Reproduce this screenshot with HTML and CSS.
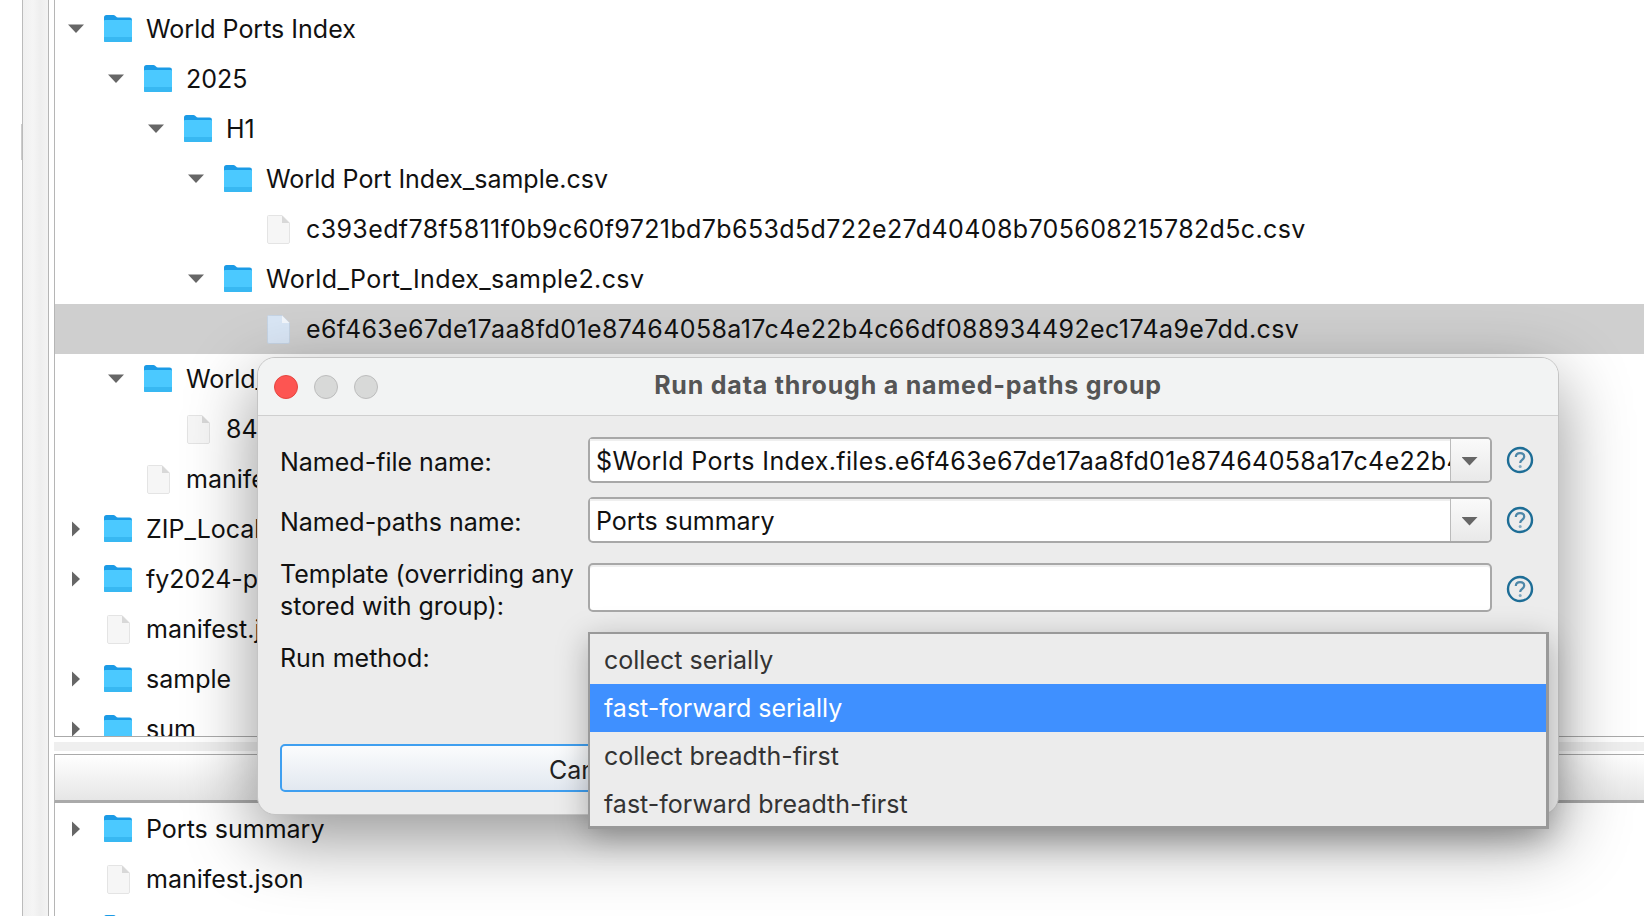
FILE: index.html
```html
<!DOCTYPE html>
<html lang="en">
<head>
    <meta charset="UTF-8">
    <meta name="viewport" content="width=device-width, initial-scale=1.0">
    <title>Run data through a named-paths group</title>
    <link rel="stylesheet" href="styles.css">
</head>
<body>
    <svg class="defs" width="0" height="0">
        <symbol id="folder" viewBox="0 0 28 28">
            <path d="M0 2.5Q0 0 2.5 0H9.5Q11 0 12 1.5Q12.8 2.6 14 2.6H25.5Q28 2.6 28 5V25.5Q28 27 26 27H2Q0 27 0 25.5Z" fill="#1b9be6"/>
            <path d="M0 6Q0 5 1 5H27Q28 5 28 6V25.5Q28 27 26 27H2Q0 27 0 25.5Z" fill="#4bc9ff"/>
            <path d="M0 22H28V25.5Q28 27 26 27H2Q0 27 0 25.5Z" fill="#38b8f2"/>
        </symbol>
        <symbol id="file" viewBox="0 0 23 29">
            <path d="M1.5 .5H15L22.5 8V27Q22.5 28.5 21 28.5H2Q.5 28.5 .5 27V1.5Q.5 .5 1.5 .5Z" fill="#f6f6f6" stroke="#e4e4e4"/>
            <path d="M15 .5V8H22.5Z" fill="#d8d8d8"/>
        </symbol>
        <symbol id="file-selected" viewBox="0 0 23 29">
            <path d="M1.5 .5H15L22.5 8V27Q22.5 28.5 21 28.5H2Q.5 28.5 .5 27V1.5Q.5 .5 1.5 .5Z" fill="#d9e6f5" stroke="#c6d4e4"/>
            <path d="M15 .5V8H22.5Z" fill="#f2f6fb"/>
        </symbol>
        <symbol id="help" viewBox="0 0 28 28">
            <circle cx="14" cy="14" r="12" fill="none" stroke="#1d6d96" stroke-width="2.4"/>
            <path d="M9.8 11Q10 7.2 14 7.2Q18.2 7.2 18.2 10.6Q18.2 12.6 16 14Q14.2 15.1 14.2 17" fill="none" stroke="#4d87a8" stroke-width="2.2"/>
            <circle cx="14.2" cy="20.4" r="1.5" fill="#7fa9c1"/>
        </symbol>
    </svg>

    <div class="side-strip"></div>

    <div class="panels">
        <div class="tree top-tree">
            <div class="row lvl0"><i class="arrow down"></i><svg class="folder"><use href="#folder"/></svg><span>World Ports Index</span></div>
            <div class="row lvl1"><i class="arrow down"></i><svg class="folder"><use href="#folder"/></svg><span>2025</span></div>
            <div class="row lvl2"><i class="arrow down"></i><svg class="folder"><use href="#folder"/></svg><span>H1</span></div>
            <div class="row lvl3"><i class="arrow down"></i><svg class="folder"><use href="#folder"/></svg><span>World Port Index_sample.csv</span></div>
            <div class="row lvl4"><i class="arrow"></i><svg class="file"><use href="#file"/></svg><span class="wide">c393edf78f5811f0b9c60f9721bd7b653d5d722e27d40408b705608215782d5c.csv</span></div>
            <div class="row lvl3"><i class="arrow down"></i><svg class="folder"><use href="#folder"/></svg><span class="wide">World_Port_Index_sample2.csv</span></div>
            <div class="row lvl4 selected"><i class="arrow"></i><svg class="file"><use href="#file-selected"/></svg><span class="wide">e6f463e67de17aa8fd01e87464058a17c4e22b4c66df088934492ec174a9e7dd.csv</span></div>
            <div class="row lvl1"><i class="arrow down"></i><svg class="folder"><use href="#folder"/></svg><span>World_Port_Index_sample</span></div>
            <div class="row lvl2"><i class="arrow"></i><svg class="file"><use href="#file"/></svg><span>84f1c0a7e2.csv</span></div>
            <div class="row lvl1"><i class="arrow"></i><svg class="file"><use href="#file"/></svg><span>manifest.json</span></div>
            <div class="row lvl0"><i class="arrow right"></i><svg class="folder"><use href="#folder"/></svg><span>ZIP_Locale_Detail</span></div>
            <div class="row lvl0"><i class="arrow right"></i><svg class="folder"><use href="#folder"/></svg><span>fy2024-parquet</span></div>
            <div class="row lvl0"><i class="arrow"></i><svg class="file"><use href="#file"/></svg><span>manifest.json</span></div>
            <div class="row lvl0"><i class="arrow right"></i><svg class="folder"><use href="#folder"/></svg><span>sample</span></div>
            <div class="row lvl0"><i class="arrow right"></i><svg class="folder"><use href="#folder"/></svg><span>sum</span></div>
        </div>
        <div class="splitter"></div>
        <div class="lower">
            <div class="lower-header"></div>
            <div class="tree lower-tree">
                <div class="row lvl0"><i class="arrow right"></i><svg class="folder"><use href="#folder"/></svg><span>Ports summary</span></div>
                <div class="row lvl0"><i class="arrow"></i><svg class="file"><use href="#file"/></svg><span>manifest.json</span></div>
                <div class="row lvl0"><i class="arrow right"></i><svg class="folder"><use href="#folder"/></svg><span>sample</span></div>
            </div>
        </div>
    </div>

    <div class="dialog">
        <div class="titlebar">
            <div class="lights">
                <i class="light red"></i>
                <i class="light"></i>
                <i class="light"></i>
            </div>
            <div class="title">Run data through a named-paths group</div>
        </div>
        <div class="form">
            <label>Named-file name:</label>
            <div class="combo">
                <div class="combo-text wide">$World Ports Index.files.e6f463e67de17aa8fd01e87464058a17c4e22b4c66df088934492ec174a9e7dd.csv</div>
                <div class="combo-btn"><i class="arrow down"></i></div>
            </div>
            <svg class="help"><use href="#help"/></svg>

            <label>Named-paths name:</label>
            <div class="combo">
                <div class="combo-text">Ports summary</div>
                <div class="combo-btn"><i class="arrow down"></i></div>
            </div>
            <svg class="help"><use href="#help"/></svg>

            <label class="two-line">Template (overriding any stored with group):</label>
            <div class="combo tall"></div>
            <svg class="help tall-help"><use href="#help"/></svg>

            <label class="run-label">Run method:</label>
        </div>
        <div class="actions">
            <button class="cancel">Cancel</button>
        </div>
        <div class="popup">
            <div class="option">collect serially</div>
            <div class="option active">fast-forward serially</div>
            <div class="option">collect breadth-first</div>
            <div class="option">fast-forward breadth-first</div>
        </div>
    </div>
</body>
</html>
```

FILE: styles.css
```css
* {
    box-sizing: border-box;
}
html, body {
    height: 100%;
}
body {
    margin: 0;
    display: flex;
    overflow: hidden;
    background: #fff;
    color: #111;
    font-family: Inter, "Liberation Sans", sans-serif;
    font-size: 25px;
}
.defs {
    position: absolute;
}
.wide {
    letter-spacing: .38px;
}
.side-strip {
    flex: none;
    position: relative;
    width: 27px;
    margin-left: 22px;
    margin-right: 5px;
    background: linear-gradient(to right, #f0f0f0, #f5f5f5 40%, #eee 70%, #f3f3f3);
    border-left: 1px solid #bbb;
    border-right: 1px solid #b5b5b5;
}
.side-strip::before {
    content: "";
    position: absolute;
    left: -2px;
    top: 124px;
    width: 1px;
    height: 36px;
    background: #ccc;
}
.panels {
    flex: 1;
    min-width: 0;
    display: flex;
    flex-direction: column;
}
.tree {
    border-left: 1px solid #b5b5b5;
    overflow: hidden;
}
.top-tree {
    height: 737px;
    flex: none;
    padding-top: 4px;
    border-bottom: 1px solid #aaa;
}
.lower-tree {
    padding-top: 1px;
}
.row {
    height: 50px;
    display: flex;
    align-items: center;
    white-space: nowrap;
}
.row span {
    margin-left: 14px;
    margin-bottom: 1px;
}
.lvl0 { padding-left: 13px; }
.lvl1 { padding-left: 53px; }
.lvl2 { padding-left: 93px; }
.lvl3 { padding-left: 133px; }
.lvl4 { padding-left: 173px; }
.selected {
    background: #cfcfcf;
}
.arrow {
    display: block;
    flex: none;
    width: 16px;
    height: 17px;
    margin-right: 20px;
}
.arrow.down {
    clip-path: polygon(0 4px, 16px 4px, 8px 12.5px);
    background: #666;
}
.arrow.right {
    clip-path: polygon(4px 1px, 12px 8.5px, 4px 16px);
    background: #666;
}
.folder {
    width: 28px;
    height: 28px;
    flex: none;
}
.file {
    width: 23px;
    height: 29px;
    flex: none;
    margin-left: 3px;
    margin-right: 2px;
}
.splitter {
    height: 17px;
    flex: none;
    background: linear-gradient(to bottom, #fff 5px, #efefef 5px, #efefef 14px, #fff 14px);
}
.lower {
    flex: 1;
    min-height: 0;
    overflow: hidden;
}
.lower-header {
    height: 49px;
    border-top: 1px solid #aaa;
    border-left: 1px solid #b5b5b5;
    border-bottom: 3px solid #aaa;
    background: linear-gradient(to bottom, #fff, #e6e6e6);
}

/* dialog floats over the tree */
.dialog {
    position: absolute;
    left: 257px;
    top: 357px;
    width: 1302px;
    height: 458px;
    background: #ececec;
    border: 1px solid #c4c4c4;
    border-radius: 18px;
    box-shadow: 0 24px 70px rgba(0, 0, 0, .42);
}
.titlebar {
    height: 58px;
    display: flex;
    align-items: center;
    position: relative;
    background: #f2f3f3;
    border-bottom: 1px solid #cfcfcf;
    border-radius: 17px 17px 0 0;
}
.lights {
    display: flex;
    gap: 16px;
    padding-left: 16px;
}
.light {
    display: block;
    width: 24px;
    height: 24px;
    border-radius: 50%;
    background: #d8d9d8;
    border: 1px solid #bdbdbd;
}
.light.red {
    background: #fd5552;
    border-color: #e5453f;
}
.title {
    position: absolute;
    left: 0;
    right: 0;
    margin-bottom: 3px;
    text-align: center;
    font-weight: 700;
    letter-spacing: .8px;
    color: #555;
}
.form {
    display: grid;
    grid-template-columns: 308px 904px 42px;
    grid-template-rows: 46px 46px 49px 46px;
    row-gap: 14px;
    padding: 21px 0 0 22px;
    align-items: center;
}
.form label {
    line-height: 32px;
    padding-top: 4px;
}
.form .help {
    width: 28px;
    height: 28px;
    margin-left: 14px;
}
.combo {
    height: 46px;
    display: flex;
    background: #fff;
    border: 2px solid #a8a8a8;
    border-radius: 5px;
}
.combo.tall {
    height: 49px;
    margin-top: 12px;
    box-shadow: inset 0 2px 0 #efefef;
}
.form .two-line {
    padding-top: 0;
    margin-top: 16px;
}
.form .tall-help {
    margin-top: 14px;
}
.combo-text {
    flex: 1;
    min-width: 0;
    overflow: hidden;
    white-space: nowrap;
    padding-left: 6px;
    line-height: 44px;
    box-shadow: inset 0 2px 0 #efefef;
}
.combo-btn {
    width: 40px;
    flex: none;
    display: flex;
    align-items: center;
    justify-content: center;
    border-left: 1px solid #bbb;
    background: linear-gradient(to bottom, #fafafa, #e9e9e9);
    border-radius: 0 3px 3px 0;
}
.combo-btn .arrow {
    margin: 3px 2px 0 0;
}
.form .run-label {
    grid-column: 1;
    padding-top: 0;
    margin-top: 30px;
}
.actions {
    position: absolute;
    top: 386px;
    left: 0;
    padding: 0 22px;
}
.cancel {
    display: block;
    width: 620px;
    height: 48px;
    padding-top: 4px;
    font: inherit;
    color: #222;
    background: linear-gradient(to bottom, #fbfcfd, #e2e8f0);
    border: 2px solid #3f9ff0;
    border-radius: 5px;
}
.popup {
    position: absolute;
    left: 330px;
    top: 274px;
    width: 961px;
    height: 197px;
    padding: 2px 0;
    background: #ececec;
    border: 2px solid #999;
    border-right-width: 3px;
    border-bottom-width: 3px;
    box-shadow: 0 8px 30px rgba(0, 0, 0, .28);
}
.option {
    height: 48px;
    line-height: 48px;
    padding-left: 14px;
    color: #333;
}
.option.active {
    background: #3f90ff;
    color: #fff;
}
```
